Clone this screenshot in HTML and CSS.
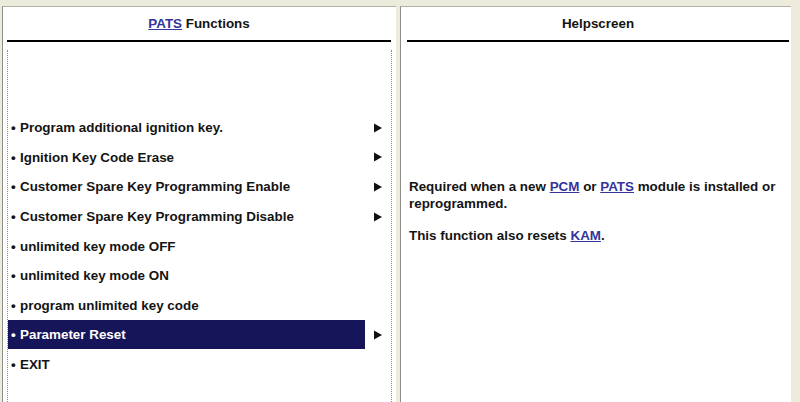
FILE: index.html
```html
<!DOCTYPE html>
<html>
<head>
<meta charset="utf-8">
<title>PATS Functions</title>
<link rel="stylesheet" href="styles.css">
</head>
<body>
<div class="screen">
  <section class="panel panel-left">
    <div class="panel-head head-left"><a class="link" href="#">PATS</a> Functions</div>
    <ul class="menu">
      <li class="row"><span class="label"><span class="dot">•</span>Program additional ignition key.</span><svg class="arrow" width="8" height="10" viewBox="0 0 8 10"><path d="M0 0.5L8 5L0 9.5Z"/></svg></li>
      <li class="row"><span class="label"><span class="dot">•</span>Ignition Key Code Erase</span><svg class="arrow" width="8" height="10" viewBox="0 0 8 10"><path d="M0 0.5L8 5L0 9.5Z"/></svg></li>
      <li class="row"><span class="label"><span class="dot">•</span>Customer Spare Key Programming Enable</span><svg class="arrow" width="8" height="10" viewBox="0 0 8 10"><path d="M0 0.5L8 5L0 9.5Z"/></svg></li>
      <li class="row"><span class="label"><span class="dot">•</span>Customer Spare Key Programming Disable</span><svg class="arrow" width="8" height="10" viewBox="0 0 8 10"><path d="M0 0.5L8 5L0 9.5Z"/></svg></li>
      <li class="row"><span class="label"><span class="dot">•</span>unlimited key mode OFF</span></li>
      <li class="row"><span class="label"><span class="dot">•</span>unlimited key mode ON</span></li>
      <li class="row"><span class="label"><span class="dot">•</span>program unlimited key code</span></li>
      <li class="row selected"><span class="label"><span class="dot">•</span>Parameter Reset</span><svg class="arrow" width="8" height="10" viewBox="0 0 8 10"><path d="M0 0.5L8 5L0 9.5Z"/></svg></li>
      <li class="row"><span class="label"><span class="dot">•</span>EXIT</span></li>
    </ul>
  </section>
  <section class="panel panel-right">
    <div class="panel-head head-right">Helpscreen</div>
    <div class="help">
      <p>Required when a new <a class="link" href="#">PCM</a> or <a class="link" href="#">PATS</a> module is installed or reprogrammed.</p>
      <p>This function also resets <a class="link" href="#">KAM</a>.</p>
    </div>
  </section>
</div>
</body>
</html>
```

FILE: styles.css
```css
html, body {
  margin: 0;
  padding: 0;
}

body {
  background: #ecebdc;
  font-family: "Liberation Sans", Arial, sans-serif;
  font-size: 13.4px;
  font-weight: bold;
  color: #141414;
}

.screen {
  display: flex;
  gap: 4px;
  height: 402px;
  padding: 6px 0 0 2px;
  box-sizing: border-box;
  overflow: hidden;
}

.panel {
  background: #fff;
  border-left: 1px solid #8e8e88;
  border-top: 1px solid #b4b2a6;
  display: flex;
  flex-direction: column;
}

.panel-left {
  width: 393px;
}

.panel-right {
  width: 390px;
}

.panel-head {
  height: 33px;
  line-height: 33px;
  text-align: center;
  border-bottom: 2px solid #000;
}

.head-left {
  margin: 0 5px 0 4px;
}

.head-right {
  margin: 0 2px 0 6px;
}

.link {
  color: #34349c;
  text-decoration: underline;
}

.menu {
  list-style: none;
  margin: 8px 4px 0 4px;
  padding: 63px 0 0 0;
  flex: 1;
  border-left: 1px dotted #8a8a8a;
  border-right: 1px dotted #8a8a8a;
}

.row {
  height: 29.6px;
  display: flex;
  align-items: center;
}

.label {
  width: 354px;
  height: 29px;
  line-height: 29px;
  padding-left: 3px;
  white-space: nowrap;
  display: flex;
}

.dot {
  width: 9px;
  flex: none;
}

.selected .label {
  background: #16155a;
  color: #fff;
}

.arrow {
  margin-left: 9px;
  fill: #111;
  flex: none;
}

.help {
  margin-top: 136px;
  padding: 0 4px 0 8px;
  line-height: 17px;
}

.help p {
  margin: 0 0 15px 0;
}
```
